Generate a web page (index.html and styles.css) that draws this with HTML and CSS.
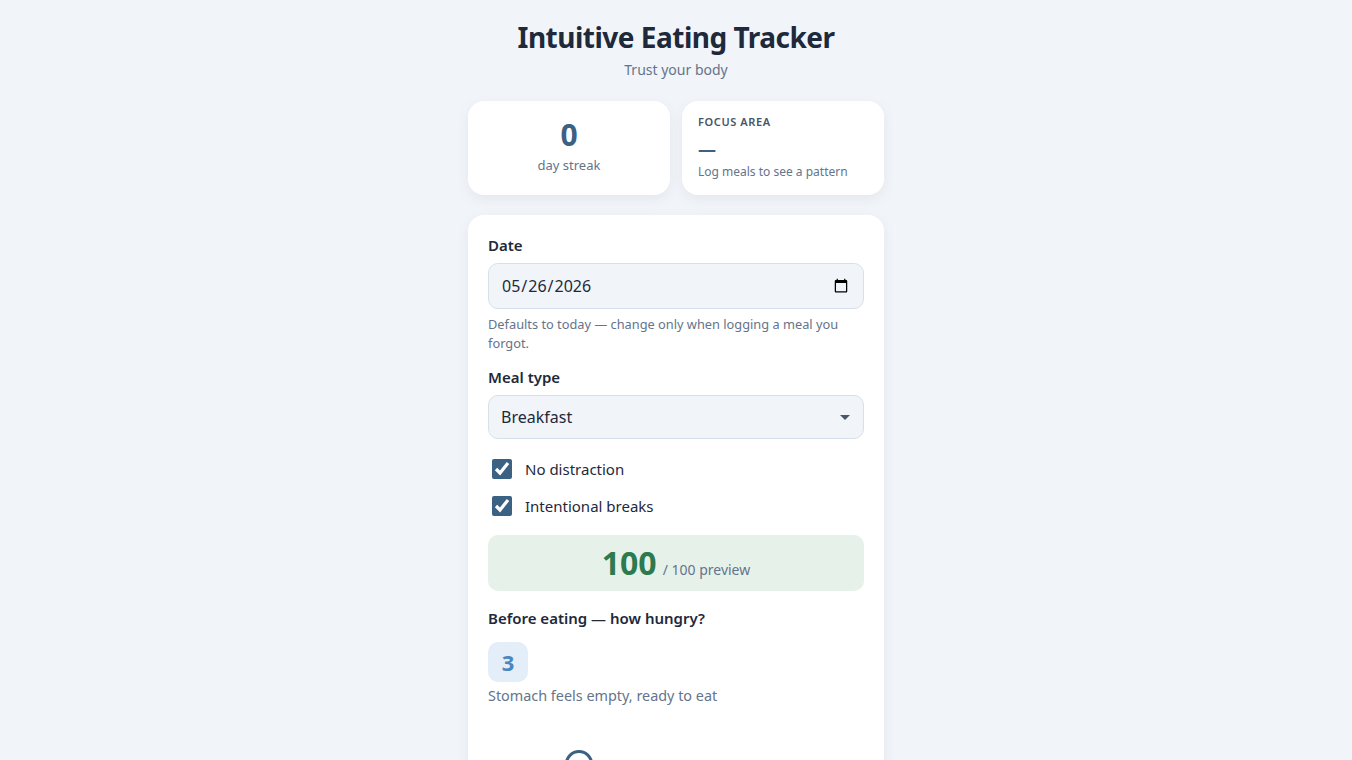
FILE: index.html
```html
<!DOCTYPE html>
<html lang="en">
<head>
    <meta charset="UTF-8">
    <title>Intuitive Eating Tracker</title>
    <link rel="stylesheet" href="styles.css">
</head>
<body>

    <div class="app">
        <header class="top">
            <h1>Intuitive Eating Tracker</h1>
            <p class="tagline">Trust your body</p>
        </header>

        <div class="stats">
            <div class="stat stat-streak">
                <div class="stat-num">0</div>
                <div class="stat-sub">day streak</div>
            </div>
            <div class="stat stat-focus">
                <div class="stat-label">Focus area</div>
                <div class="stat-dash">—</div>
                <div class="stat-note">Log meals to see a pattern</div>
            </div>
        </div>

        <form class="card">
            <label class="field-label" for="mealDate">Date</label>
            <input class="field" type="date" id="mealDate" value="2026-05-26">
            <p class="hint">Defaults to today — change only when logging a meal you forgot.</p>

            <label class="field-label" for="mealType">Meal type</label>
            <div class="select-wrap">
                <select class="field" id="mealType">
                    <option>Breakfast</option>
                    <option>Lunch</option>
                    <option>Dinner</option>
                    <option>Snack</option>
                </select>
            </div>

            <div class="checks">
                <label class="check"><input type="checkbox" checked> No distraction</label>
                <label class="check"><input type="checkbox" checked> Intentional breaks</label>
            </div>

            <div class="score">
                <span class="score-num">100</span>
                <span class="score-of">/ 100 preview</span>
            </div>

            <h3 class="section-title">Before eating — how hungry?</h3>
            <div class="level">3</div>
            <p class="level-text">Stomach feels empty, ready to eat</p>

            <input class="slider" type="range" min="1" max="10" value="3">
        </form>
    </div>

</body>
</html>
```

FILE: styles.css
```css
body {
    font-family: 'Noto Sans', sans-serif;
    background-color: #f1f5f9;
    color: #1e293b;
    margin: 0;
    padding: 17px 0 40px;
}

.app {
    width: 416px;
    margin: 0 auto;
}

.top {
    text-align: center;
}

h1 {
    font-size: 28px;
    font-weight: 700;
    letter-spacing: -0.5px;
    line-height: 40px;
    margin: 0;
    color: #1e293b;
}

.tagline {
    font-size: 14px;
    color: #64748b;
    margin: 2px 0 0;
    line-height: 22px;
}

.stats {
    display: grid;
    grid-template-columns: 1fr 1fr;
    gap: 12px;
    margin-top: 20px;
}

.stat {
    background: #ffffff;
    border-radius: 16px;
    box-shadow: 0 4px 14px rgba(15, 23, 42, 0.06);
    height: 94px;
    box-sizing: border-box;
}

.stat-streak {
    text-align: center;
    padding-top: 16px;
}

.stat-num {
    font-size: 30px;
    font-weight: 700;
    line-height: 36px;
    color: #3b6283;
}

.stat-sub {
    font-size: 13px;
    color: #64748b;
    line-height: 20px;
    margin-top: 2px;
}

.stat-focus {
    padding: 13px 16px;
}

.stat-label {
    font-size: 11px;
    font-weight: 600;
    text-transform: uppercase;
    letter-spacing: 0.6px;
    color: #475569;
    line-height: 16px;
}

.stat-dash {
    font-size: 18px;
    font-weight: 700;
    color: #3b6283;
    line-height: 24px;
    margin-top: 7px;
}

.stat-note {
    font-size: 12px;
    color: #64748b;
    line-height: 18px;
    margin-top: 2px;
}

.card {
    background: #ffffff;
    border-radius: 16px;
    box-shadow: 0 4px 14px rgba(15, 23, 42, 0.06);
    margin-top: 20px;
    padding: 20px 20px 60px;
}

.field-label {
    display: block;
    font-size: 15px;
    font-weight: 600;
    line-height: 20px;
    color: #1e293b;
    margin-bottom: 8px;
}

.field {
    display: block;
    width: 100%;
    box-sizing: border-box;
    height: 46px;
    padding: 0 12px;
    font-family: 'Noto Sans', sans-serif;
    font-size: 16px;
    color: #1e293b;
    background: #f1f5f9;
    border: 1px solid #d7e0ea;
    border-radius: 10px;
    outline: none;
}

.hint {
    font-size: 12.8px;
    line-height: 19px;
    color: #64748b;
    margin: 6px 0 14px;
}

.select-wrap {
    position: relative;
}

.select-wrap select {
    appearance: none;
    -webkit-appearance: none;
    height: 44px;
}

.select-wrap::after {
    content: "";
    position: absolute;
    right: 14px;
    top: 20px;
    border-left: 5px solid transparent;
    border-right: 5px solid transparent;
    border-top: 5px solid #4b5563;
}

.checks {
    margin-top: 11px;
}

.check {
    display: flex;
    align-items: center;
    gap: 13px;
    font-size: 15px;
    color: #1e293b;
    height: 37px;
    padding-left: 4px;
}

.check input {
    width: 20px;
    height: 20px;
    margin: 0;
    accent-color: #3b6283;
}

.score {
    background: #e6f2e9;
    border-radius: 10px;
    height: 56px;
    display: flex;
    align-items: baseline;
    justify-content: center;
    gap: 6px;
    margin-top: 11px;
    padding-top: 6px;
    box-sizing: border-box;
}

.score-num {
    font-size: 32px;
    font-weight: 700;
    color: #2d7a4e;
    line-height: 44px;
}

.score-of {
    font-size: 14px;
    color: #64748b;
}

.section-title {
    font-size: 15px;
    font-weight: 600;
    line-height: 22px;
    margin: 16px 0 13px;
    color: #1e293b;
}

.level {
    width: 40px;
    height: 40px;
    border-radius: 10px;
    background: #e3eef8;
    color: #4a87bd;
    font-size: 22px;
    font-weight: 700;
    display: flex;
    align-items: center;
    justify-content: center;
}

.level-text {
    font-size: 14.4px;
    color: #64748b;
    line-height: 22px;
    margin: 3px 0 0;
}

.slider {
    -webkit-appearance: none;
    appearance: none;
    display: block;
    width: 100%;
    height: 6px;
    margin: 54px 0 0;
    background: #e2e8f0;
    border-radius: 3px;
}

.slider::-webkit-slider-thumb {
    -webkit-appearance: none;
    width: 28px;
    height: 28px;
    border-radius: 50%;
    background: #ffffff;
    border: 3px solid #3b6283;
    box-sizing: border-box;
}
```
